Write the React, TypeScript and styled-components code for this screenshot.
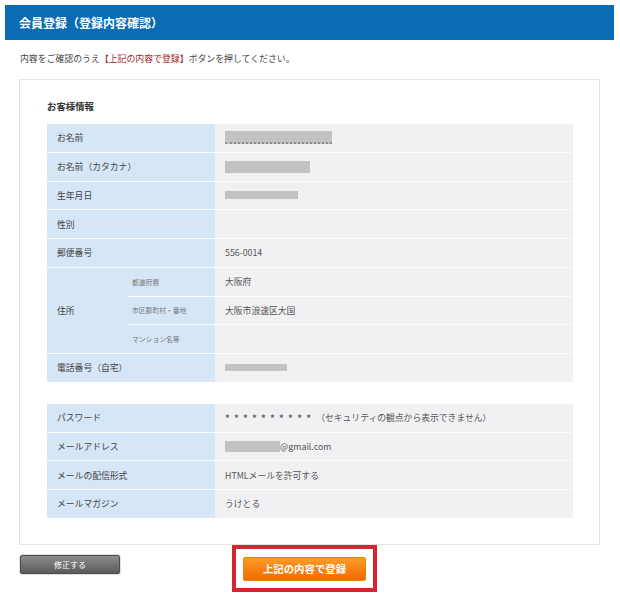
import React from 'react';
import styled, { createGlobalStyle } from 'styled-components';

const GlobalStyle = createGlobalStyle`
  body {
    margin: 0;
    background: #fff;
    font-family: "Noto Sans CJK JP", "Noto Sans", sans-serif;
  }
`;

const App: React.FC = () => {
  return (
    <Page>
      <GlobalStyle />
      <Header>会員登録（登録内容確認）</Header>
      <Content>
        <Notice>
          内容をご確認のうえ<Em>【上記の内容で登録】</Em>ボタンを押してください。
        </Notice>

        <Card>
          <SectionTitle>お客様情報</SectionTitle>

          <Table>
            <Label $wide>お名前</Label>
            <Value>
              <Redact $w={107} $h={11} $dotted />
            </Value>
            <Label $wide>お名前（カタカナ）</Label>
            <Value>
              <Redact $w={85} $h={12} />
            </Value>
            <Label $wide>生年月日</Label>
            <Value>
              <Redact $w={73} $h={8} />
            </Value>
            <Label $wide>性別</Label>
            <Value />
            <Label $wide>郵便番号</Label>
            <Value>556-0014</Value>

            <Label $rows={3}>住所</Label>
            <SubLabel>都道府県</SubLabel>
            <Value>大阪府</Value>
            <SubLabel>市区郡町村・番地</SubLabel>
            <Value>大阪市浪速区大国</Value>
            <SubLabel>マンション名等</SubLabel>
            <Value />

            <Label $wide>電話番号（自宅）</Label>
            <Value>
              <Redact $w={62} $h={7} />
            </Value>
          </Table>

          <Table>
            <Label $wide>パスワード</Label>
            <Value>
              <Stars>**********</Stars>（セキュリティの観点から表示できません）
            </Value>
            <Label $wide>メールアドレス</Label>
            <Value>
              <Redact $w={55} $h={11} />
              @gmail.com
            </Value>
            <Label $wide>メールの配信形式</Label>
            <Value>HTMLメールを許可する</Value>
            <Label $wide>メールマガジン</Label>
            <Value>うけとる</Value>
          </Table>
        </Card>

        <Actions>
          <BackButton type="button">修正する</BackButton>
          <Highlight>
            <SubmitButton type="button">上記の内容で登録</SubmitButton>
          </Highlight>
        </Actions>
      </Content>
    </Page>
  );
};

const Page = styled.div`
  width: 620px;
  box-sizing: border-box;
  padding: 5px 6px 0 5px;
`;

const Header = styled.h1`
  margin: 0;
  height: 35px;
  display: flex;
  align-items: center;
  padding-left: 14px;
  background: #0b6cb3;
  color: #fff;
  font-size: 12px;
  font-weight: bold;
`;

const Content = styled.div`
  padding: 0 14px;
`;

const Notice = styled.p`
  margin: 12px 0 13px 1px;
  font-size: 8.9px;
  line-height: 14px;
  color: #444;
`;

const Em = styled.span`
  color: #a3272b;
`;

const Card = styled.div`
  border: 1px solid #e4e4e6;
  padding: 19px 26px 26px 27px;
  display: flex;
  flex-direction: column;
  gap: 22px;
`;

const SectionTitle = styled.h2`
  margin: 0 0 -11px;
  font-size: 9.4px;
  line-height: 14px;
  font-weight: bold;
  color: #333;
`;

const Table = styled.div`
  display: grid;
  grid-template-columns: 80px 88px 1fr;
  grid-auto-rows: 27.75px;
  row-gap: 1px;
  background: #fafbfc;
`;

const Cell = styled.div`
  display: flex;
  align-items: center;
  font-size: 8.8px;
  color: #444;
  white-space: nowrap;
`;

const Label = styled(Cell)<{ $wide?: boolean; $rows?: number }>`
  background: #d5e6f7;
  padding-left: 10px;
  grid-column: ${(p) => (p.$wide ? '1 / 3' : '1 / 2')};
  grid-row: ${(p) => (p.$rows ? `span ${p.$rows}` : 'auto')};
`;

const SubLabel = styled(Cell)`
  background: #d5e6f7;
  padding-left: 5px;
  font-size: 6.8px;
  color: #777;
`;

const Value = styled(Cell)`
  background: #f1f1f3;
  padding-left: 10px;
  color: #555;
`;

const Redact = styled.span<{ $w: number; $h: number; $dotted?: boolean }>`
  display: inline-block;
  width: ${(p) => p.$w}px;
  height: ${(p) => p.$h}px;
  background: #c2c2c2;
  border-bottom: ${(p) => (p.$dotted ? '2px dotted #8d8d8d' : 'none')};
`;

const Stars = styled.span`
  letter-spacing: 4.2px;
  font-size: 9.5px;
  font-weight: bold;
  color: #666;
  margin-right: 1px;
`;

const Actions = styled.div`
  display: flex;
  align-items: flex-start;
  padding-left: 1px;
`;

const BackButton = styled.button`
  margin-top: 10px;
  width: 100px;
  height: 19px;
  border: 1px solid #4c4c4c;
  border-radius: 2px;
  box-shadow: 0 0 0 1px #e0e0e0;
  background: linear-gradient(#8c8c8c, #5b5b5b);
  color: #fff;
  font-family: inherit;
  font-size: 8px;
  padding: 0;
`;

const Highlight = styled.div`
  margin-left: 112px;
  border: 4px solid #d42530;
  padding: 8px 7px 7px 7px;
  background: #fff;
`;

const SubmitButton = styled.button`
  display: block;
  width: 123px;
  height: 24px;
  border: 1px solid #e9810a;
  border-radius: 2px;
  background: linear-gradient(#fb9c2a, #f26a00);
  color: #fff;
  font-family: inherit;
  font-size: 10.4px;
  font-weight: bold;
  padding: 0;
`;

export default App;
